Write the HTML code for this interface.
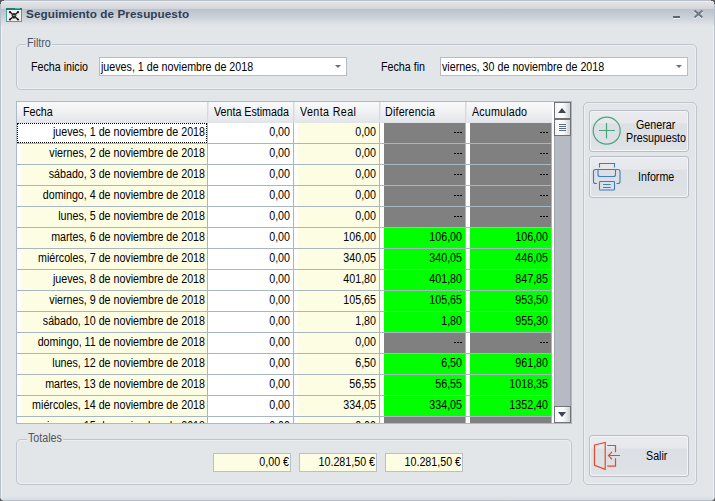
<!DOCTYPE html>
<html><head><meta charset="utf-8">
<style>
:root{--yel:#fdfde4;--grn:#00ff00;--gry:#808080;--gl:#a8b6c0;--bg:#e3e6e9}
*{box-sizing:border-box;margin:0;padding:0}
html,body{width:715px;height:501px;overflow:hidden;background:var(--bg);font-family:"Liberation Sans",sans-serif;font-size:10.7px;color:#000}
.a{position:absolute}
.t,.c i,.tb i{position:absolute;white-space:nowrap;line-height:13px;font-style:normal;transform:scaleY(1.15);transform-origin:0 10px}
.ttl{position:absolute;left:26px;top:7px;font-weight:bold;font-size:11.7px;letter-spacing:0.08px;color:#2f3e56;white-space:nowrap;line-height:13px}
.grp{position:absolute;border:1px solid #c0c5cd;border-radius:5px;box-shadow:inset 0 0 0 1px #eceef1}
.leg{background:var(--bg);padding:0 1px;color:#4d5563}
.combo{position:absolute;background:#fff;border:1px solid #b5bdcb;height:19px}
.arr{position:absolute;width:0;height:0;border-left:3px solid transparent;border-right:3px solid transparent;border-top:3px solid #68707b}
.grid{position:absolute;left:16px;top:101px;width:556px;height:323px;border:1px solid #adb9c6;background:#fff;overflow:hidden}
.hdr{position:absolute;top:0;height:21px;background:linear-gradient(#f9fafb,#eef0f2 50%,#e5e7ea 90%,#dfe2e6)}
.hdv{position:absolute;top:0;height:21px;width:2px;background:linear-gradient(90deg,#cdd3da,#eceef1)}
.c{position:absolute;height:20px;overflow:hidden}
.c i{right:2px;top:3px}
.c.n i{right:3px}
.dsh{position:absolute;width:8px;height:1px;background:repeating-linear-gradient(90deg,#000 0,#000 2px,transparent 2px,transparent 3px)}
.hl{position:absolute;left:0;width:535px;height:1px;background:var(--gl)}
.vl{position:absolute;top:21px;width:1px;height:310px;background:var(--gl)}
.btn{position:absolute;border:1px solid #b9bec6;border-radius:3px;background:linear-gradient(#e9ebee 0,#e6e8eb 12px,#dce0e4 13px,#dde0e4 33px,#e2e5e8 40px);box-shadow:inset 0 0 0 1px #f3f4f6}
.tb{position:absolute;border:1px solid #b8c0cc;background:#fdfde4;height:19px}
.tb i{right:1px;top:2px}
.sbb{position:absolute;left:537px;width:17px;height:17px;border:1px solid #6e737b;background:linear-gradient(90deg,#f3f3f4,#fff 35%,#fafafa 55%,#d2d3d6)}
</style></head><body>
<!-- window frame -->
<div class="a" style="left:1px;top:496px;width:713px;height:4px;background:linear-gradient(#e2e5e8,#d8dbdf)"></div>
<div class="a" style="left:0;top:0;width:715px;height:501px;border:1px solid #b7c0ca;border-radius:4px 4px 0 0"></div>
<div class="a" style="left:1px;top:1px;width:713px;height:499px;border:1px solid #f1f2f4;border-width:0 1px 0 1px"></div>
<div class="a" style="left:1px;top:1px;width:713px;height:25px;border-radius:3px 3px 0 0;background:linear-gradient(#e4e5e8 0,#dcdee1 4px,#d3d5d9 7.9px,#b9c2cc 8px,#c3cad2 13px,#d6dadf 20px,#e3e6e9 25px)"></div>
<div class="a" style="left:1px;top:1px;width:713px;height:1px;background:#eceef0"></div>
<!-- corners (outside) -->
<div class="a" style="left:0;top:0;width:4px;height:1px;background:#595959"></div>
<div class="a" style="left:0;top:0;width:1px;height:4px;background:#595959"></div>
<div class="a" style="left:1px;top:1px;width:1px;height:1px;background:#7a7f86"></div>
<div class="a" style="left:711px;top:0;width:4px;height:1px;background:#595959"></div>
<div class="a" style="left:714px;top:0;width:1px;height:4px;background:#595959"></div>
<div class="a" style="left:713px;top:1px;width:1px;height:1px;background:#7a7f86"></div>
<div class="a" style="left:0;top:498px;width:3px;height:3px;background:linear-gradient(45deg,#555 0,#666 45%,transparent 55%)"></div>
<div class="a" style="left:712px;top:498px;width:3px;height:3px;background:linear-gradient(315deg,#555 0,#666 45%,transparent 55%)"></div>
<!-- app icon -->
<svg class="a" style="left:6px;top:8px" width="16" height="14" viewBox="0 0 16 14">
<rect x="0.5" y="0.5" width="15" height="13" fill="#efefef" stroke="#4d9f97"/>
<rect x="0" y="0" width="16" height="2" fill="#1f7d74"/><rect x="9" y="0" width="5" height="1" fill="#45b3a6"/>
<path d="M4.3 4.3 L11.7 11.3 M11.7 4.3 L4.3 11.3" stroke="#1a1a1a" stroke-width="1.3"/>
<circle cx="4" cy="4.2" r="1.1" fill="#111"/><circle cx="12" cy="4.2" r="1.1" fill="#111"/><circle cx="4" cy="11.5" r="1.1" fill="#111"/><circle cx="12" cy="11.5" r="1.1" fill="#111"/>
<circle cx="8" cy="7.3" r="2.3" fill="#2a2a2a"/><rect x="6.6" y="8.5" width="2.8" height="2" fill="#2a2a2a"/>
<rect x="6.8" y="7" width="1" height="1" fill="#aaa"/><rect x="8.4" y="7" width="1" height="1" fill="#aaa"/>
</svg>
<div class="ttl">Seguimiento de Presupuesto</div>
<!-- min / close -->
<div class="a" style="left:673px;top:16px;width:7px;height:2px;background:#5a6676"></div>
<div class="a" style="left:673px;top:18px;width:7px;height:1px;background:#f0f2f4"></div>
<svg class="a" style="left:693px;top:9px" width="11" height="11" viewBox="0 0 11 11"><path d="M1.6 1.4 L9.4 8.6 M9.4 1.4 L1.6 8.6" stroke="#f2f3f5" stroke-width="2" transform="translate(0,1)"/><path d="M1.6 1.4 L9.4 8.6 M9.4 1.4 L1.6 8.6" stroke="#6b7888" stroke-width="2.1"/></svg>

<!-- Filtro group -->
<div class="grp" style="left:16px;top:44px;width:681px;height:46px"></div>
<div class="t leg" style="left:26px;top:37px">Filtro</div>
<div class="t" style="left:31px;top:61px">Fecha inicio</div>
<div class="combo" style="left:99px;top:57px;width:248px"><span class="t" style="left:1px;top:3px">jueves, 1 de noviembre de 2018</span><div class="arr" style="left:235px;top:7px"></div></div>
<div class="t" style="left:381px;top:61px">Fecha fin</div>
<div class="combo" style="left:440px;top:57px;width:248px"><span class="t" style="left:1px;top:3px;letter-spacing:0.02px">viernes, 30 de noviembre de 2018</span><div class="arr" style="left:235px;top:7px"></div></div>

<!-- Grid -->
<div class="grid">
<div class="hdr" style="left:0;width:535px"></div>
<span class="t" style="left:6px;top:4px">Fecha</span>
<span class="t" style="left:197px;top:4px">Venta Estimada</span>
<span class="t" style="left:283px;top:4px;letter-spacing:0.4px">Venta Real</span>
<span class="t" style="left:368px;top:4px;letter-spacing:0.2px">Diferencia</span>
<span class="t" style="left:455px;top:4px;letter-spacing:0.2px">Acumulado</span>
<div class="hdv" style="left:190px"></div>
<div class="hdv" style="left:276px"></div>
<div class="hdv" style="left:362px"></div>
<div class="hdv" style="left:448px"></div>
<div class="c" style="left:4px;top:21px;width:186px;background:#fff"><i>jueves, 1 de noviembre de 2018</i></div>
<div class="c n" style="left:191px;top:21px;width:85px;background:#fff"><i>0,00</i></div>
<div class="c n" style="left:281px;top:21px;width:81px;background:var(--yel)"><i>0,00</i></div>
<div class="c n" style="left:367px;top:21px;width:81px;background:var(--gry)"><i></i></div>
<div class="dsh" style="left:437px;top:30px"></div>
<div class="c n" style="left:453px;top:21px;width:81px;background:var(--gry)"><i></i></div>
<div class="dsh" style="left:523px;top:30px"></div>
<div class="hl" style="top:41px"></div>
<div class="c" style="left:4px;top:42px;width:186px;background:var(--yel)"><i>viernes, 2 de noviembre de 2018</i></div>
<div class="c n" style="left:191px;top:42px;width:85px;background:#fff"><i>0,00</i></div>
<div class="c n" style="left:281px;top:42px;width:81px;background:var(--yel)"><i>0,00</i></div>
<div class="c n" style="left:367px;top:42px;width:81px;background:var(--gry)"><i></i></div>
<div class="dsh" style="left:437px;top:51px"></div>
<div class="c n" style="left:453px;top:42px;width:81px;background:var(--gry)"><i></i></div>
<div class="dsh" style="left:523px;top:51px"></div>
<div class="hl" style="top:62px"></div>
<div class="c" style="left:4px;top:63px;width:186px;background:var(--yel)"><i>sábado, 3 de noviembre de 2018</i></div>
<div class="c n" style="left:191px;top:63px;width:85px;background:#fff"><i>0,00</i></div>
<div class="c n" style="left:281px;top:63px;width:81px;background:var(--yel)"><i>0,00</i></div>
<div class="c n" style="left:367px;top:63px;width:81px;background:var(--gry)"><i></i></div>
<div class="dsh" style="left:437px;top:72px"></div>
<div class="c n" style="left:453px;top:63px;width:81px;background:var(--gry)"><i></i></div>
<div class="dsh" style="left:523px;top:72px"></div>
<div class="hl" style="top:83px"></div>
<div class="c" style="left:4px;top:84px;width:186px;background:var(--yel)"><i>domingo, 4 de noviembre de 2018</i></div>
<div class="c n" style="left:191px;top:84px;width:85px;background:#fff"><i>0,00</i></div>
<div class="c n" style="left:281px;top:84px;width:81px;background:var(--yel)"><i>0,00</i></div>
<div class="c n" style="left:367px;top:84px;width:81px;background:var(--gry)"><i></i></div>
<div class="dsh" style="left:437px;top:93px"></div>
<div class="c n" style="left:453px;top:84px;width:81px;background:var(--gry)"><i></i></div>
<div class="dsh" style="left:523px;top:93px"></div>
<div class="hl" style="top:104px"></div>
<div class="c" style="left:4px;top:105px;width:186px;background:var(--yel)"><i>lunes, 5 de noviembre de 2018</i></div>
<div class="c n" style="left:191px;top:105px;width:85px;background:#fff"><i>0,00</i></div>
<div class="c n" style="left:281px;top:105px;width:81px;background:var(--yel)"><i>0,00</i></div>
<div class="c n" style="left:367px;top:105px;width:81px;background:var(--gry)"><i></i></div>
<div class="dsh" style="left:437px;top:114px"></div>
<div class="c n" style="left:453px;top:105px;width:81px;background:var(--gry)"><i></i></div>
<div class="dsh" style="left:523px;top:114px"></div>
<div class="hl" style="top:125px"></div>
<div class="c" style="left:4px;top:126px;width:186px;background:var(--yel)"><i>martes, 6 de noviembre de 2018</i></div>
<div class="c n" style="left:191px;top:126px;width:85px;background:#fff"><i>0,00</i></div>
<div class="c n" style="left:281px;top:126px;width:81px;background:var(--yel)"><i>106,00</i></div>
<div class="c n" style="left:367px;top:126px;width:81px;background:var(--grn)"><i>106,00</i></div>
<div class="c n" style="left:453px;top:126px;width:81px;background:var(--grn)"><i>106,00</i></div>
<div class="hl" style="top:146px"></div>
<div class="c" style="left:4px;top:147px;width:186px;background:var(--yel)"><i>miércoles, 7 de noviembre de 2018</i></div>
<div class="c n" style="left:191px;top:147px;width:85px;background:#fff"><i>0,00</i></div>
<div class="c n" style="left:281px;top:147px;width:81px;background:var(--yel)"><i>340,05</i></div>
<div class="c n" style="left:367px;top:147px;width:81px;background:var(--grn)"><i>340,05</i></div>
<div class="c n" style="left:453px;top:147px;width:81px;background:var(--grn)"><i>446,05</i></div>
<div class="hl" style="top:167px"></div>
<div class="c" style="left:4px;top:168px;width:186px;background:var(--yel)"><i>jueves, 8 de noviembre de 2018</i></div>
<div class="c n" style="left:191px;top:168px;width:85px;background:#fff"><i>0,00</i></div>
<div class="c n" style="left:281px;top:168px;width:81px;background:var(--yel)"><i>401,80</i></div>
<div class="c n" style="left:367px;top:168px;width:81px;background:var(--grn)"><i>401,80</i></div>
<div class="c n" style="left:453px;top:168px;width:81px;background:var(--grn)"><i>847,85</i></div>
<div class="hl" style="top:188px"></div>
<div class="c" style="left:4px;top:189px;width:186px;background:var(--yel)"><i>viernes, 9 de noviembre de 2018</i></div>
<div class="c n" style="left:191px;top:189px;width:85px;background:#fff"><i>0,00</i></div>
<div class="c n" style="left:281px;top:189px;width:81px;background:var(--yel)"><i>105,65</i></div>
<div class="c n" style="left:367px;top:189px;width:81px;background:var(--grn)"><i>105,65</i></div>
<div class="c n" style="left:453px;top:189px;width:81px;background:var(--grn)"><i>953,50</i></div>
<div class="hl" style="top:209px"></div>
<div class="c" style="left:4px;top:210px;width:186px;background:var(--yel)"><i>sábado, 10 de noviembre de 2018</i></div>
<div class="c n" style="left:191px;top:210px;width:85px;background:#fff"><i>0,00</i></div>
<div class="c n" style="left:281px;top:210px;width:81px;background:var(--yel)"><i>1,80</i></div>
<div class="c n" style="left:367px;top:210px;width:81px;background:var(--grn)"><i>1,80</i></div>
<div class="c n" style="left:453px;top:210px;width:81px;background:var(--grn)"><i>955,30</i></div>
<div class="hl" style="top:230px"></div>
<div class="c" style="left:4px;top:231px;width:186px;background:var(--yel)"><i>domingo, 11 de noviembre de 2018</i></div>
<div class="c n" style="left:191px;top:231px;width:85px;background:#fff"><i>0,00</i></div>
<div class="c n" style="left:281px;top:231px;width:81px;background:var(--yel)"><i>0,00</i></div>
<div class="c n" style="left:367px;top:231px;width:81px;background:var(--gry)"><i></i></div>
<div class="dsh" style="left:437px;top:240px"></div>
<div class="c n" style="left:453px;top:231px;width:81px;background:var(--gry)"><i></i></div>
<div class="dsh" style="left:523px;top:240px"></div>
<div class="hl" style="top:251px"></div>
<div class="c" style="left:4px;top:252px;width:186px;background:var(--yel)"><i>lunes, 12 de noviembre de 2018</i></div>
<div class="c n" style="left:191px;top:252px;width:85px;background:#fff"><i>0,00</i></div>
<div class="c n" style="left:281px;top:252px;width:81px;background:var(--yel)"><i>6,50</i></div>
<div class="c n" style="left:367px;top:252px;width:81px;background:var(--grn)"><i>6,50</i></div>
<div class="c n" style="left:453px;top:252px;width:81px;background:var(--grn)"><i>961,80</i></div>
<div class="hl" style="top:272px"></div>
<div class="c" style="left:4px;top:273px;width:186px;background:var(--yel)"><i>martes, 13 de noviembre de 2018</i></div>
<div class="c n" style="left:191px;top:273px;width:85px;background:#fff"><i>0,00</i></div>
<div class="c n" style="left:281px;top:273px;width:81px;background:var(--yel)"><i>56,55</i></div>
<div class="c n" style="left:367px;top:273px;width:81px;background:var(--grn)"><i>56,55</i></div>
<div class="c n" style="left:453px;top:273px;width:81px;background:var(--grn)"><i>1018,35</i></div>
<div class="hl" style="top:293px"></div>
<div class="c" style="left:4px;top:294px;width:186px;background:var(--yel)"><i>miércoles, 14 de noviembre de 2018</i></div>
<div class="c n" style="left:191px;top:294px;width:85px;background:#fff"><i>0,00</i></div>
<div class="c n" style="left:281px;top:294px;width:81px;background:var(--yel)"><i>334,05</i></div>
<div class="c n" style="left:367px;top:294px;width:81px;background:var(--grn)"><i>334,05</i></div>
<div class="c n" style="left:453px;top:294px;width:81px;background:var(--grn)"><i>1352,40</i></div>
<div class="hl" style="top:314px"></div>
<div class="c" style="left:4px;top:315px;width:186px;background:var(--yel)"><i>jueves, 15 de noviembre de 2018</i></div>
<div class="c n" style="left:191px;top:315px;width:85px;background:#fff"><i>0,00</i></div>
<div class="c n" style="left:281px;top:315px;width:81px;background:var(--yel)"><i>0,00</i></div>
<div class="c n" style="left:367px;top:315px;width:81px;background:var(--gry)"><i></i></div>
<div class="dsh" style="left:437px;top:324px"></div>
<div class="c n" style="left:453px;top:315px;width:81px;background:var(--gry)"><i></i></div>
<div class="dsh" style="left:523px;top:324px"></div>
<div class="hl" style="top:335px"></div>
<div class="vl" style="left:190px"></div><div class="vl" style="left:276px"></div><div class="vl" style="left:362px"></div><div class="vl" style="left:448px"></div><div class="vl" style="left:534px"></div>
<!-- focus rect -->
<div class="a" style="left:0;top:21px;width:190px;height:20px;border:1px dotted #000"></div>
<!-- scrollbar -->
<div class="a" style="left:537px;top:0;width:17px;height:321px;background:#b6bac3;border-left:1px solid #a3a7af;border-right:1px solid #9a9ea6"></div>
<div class="sbb" style="top:0"></div>
<div class="a" style="left:541px;top:6px;width:0;height:0;border-left:4.5px solid transparent;border-right:4.5px solid transparent;border-bottom:5px solid #3f4452"></div>
<div class="sbb" style="top:17px"></div>
<div class="a" style="left:542px;top:22px;width:7px;height:7px;background:repeating-linear-gradient(#5d6b7c 0,#5d6b7c 1px,transparent 1px,transparent 2px)"></div>
<div class="sbb" style="top:304px"></div>
<div class="a" style="left:541px;top:310px;width:0;height:0;border-left:4.5px solid transparent;border-right:4.5px solid transparent;border-top:5px solid #3f4452"></div>
</div>

<!-- Totales -->
<div class="grp" style="left:16px;top:439px;width:556px;height:46px"></div>
<div class="t leg" style="left:27px;top:432px">Totales</div>
<div class="tb" style="left:213px;top:453px;width:78px"><i>0,00 €</i></div>
<div class="tb" style="left:299px;top:453px;width:78px"><i>10.281,50 €</i></div>
<div class="tb" style="left:385px;top:453px;width:78px"><i>10.281,50 €</i></div>

<!-- right panel -->
<div class="grp" style="left:583px;top:102px;width:114px;height:383px"></div>
<div class="btn" style="left:589px;top:110px;width:100px;height:42px">
 <svg class="a" style="left:2px;top:5px" width="32" height="32" viewBox="0 0 32 32" fill="none" stroke="#4aa57c" stroke-width="1.2"><circle cx="14.7" cy="14.7" r="13.5"/><path d="M7 14.5 H23 M14.5 7 V22.5"/></svg>
 <span class="t" style="left:46px;top:8px">Generar</span><span class="t" style="left:36px;top:21px">Presupuesto</span>
</div>
<div class="btn" style="left:589px;top:156px;width:100px;height:42px">
 <svg class="a" style="left:2px;top:5px" width="32" height="32" viewBox="0 0 32 32" fill="none" stroke="#3f7cc4" stroke-width="1.1">
 <path d="M7.5 5.5 V1.5 H22.5 V5.5"/>
 <path d="M5 21.5 H3.5 Q1.5 21.5 1.5 19.5 V9.5 Q1.5 7.5 3.5 7.5 H26 Q28 7.5 28 9.5 V19.5 Q28 21.5 26 21.5 H24.5"/>
 <path d="M6 7.5 V12.5 Q6 14.5 8 14.5 H21.5 Q23.5 14.5 23.5 12.5 V7.5"/>
 <rect x="7.5" y="19.5" width="15" height="8.5" rx="0.8"/>
 <path d="M11 22.5 H18.7 M11 25.5 H18.7"/>
 </svg>
 <span class="t" style="left:48px;top:14px">Informe</span>
</div>
<div class="btn" style="left:589px;top:435px;width:100px;height:42px">
 <svg class="a" style="left:2px;top:4px" width="32" height="32" viewBox="0 0 32 32" fill="none" stroke="#e14b2c" stroke-width="1.2">
 <path d="M2.5 5 L13.2 2.4 V29.4 L2.5 25.4 Z"/>
 <path d="M15.2 5.5 H23.5 V12.2 M23.5 18.2 V26.2 H15.2"/>
 <path d="M28 15.5 H16.5 M20 11.8 L16.5 15.5 L20 19.3"/>
 </svg>
 <span class="t" style="left:56px;top:14px">Salir</span>
</div>
</body></html>
